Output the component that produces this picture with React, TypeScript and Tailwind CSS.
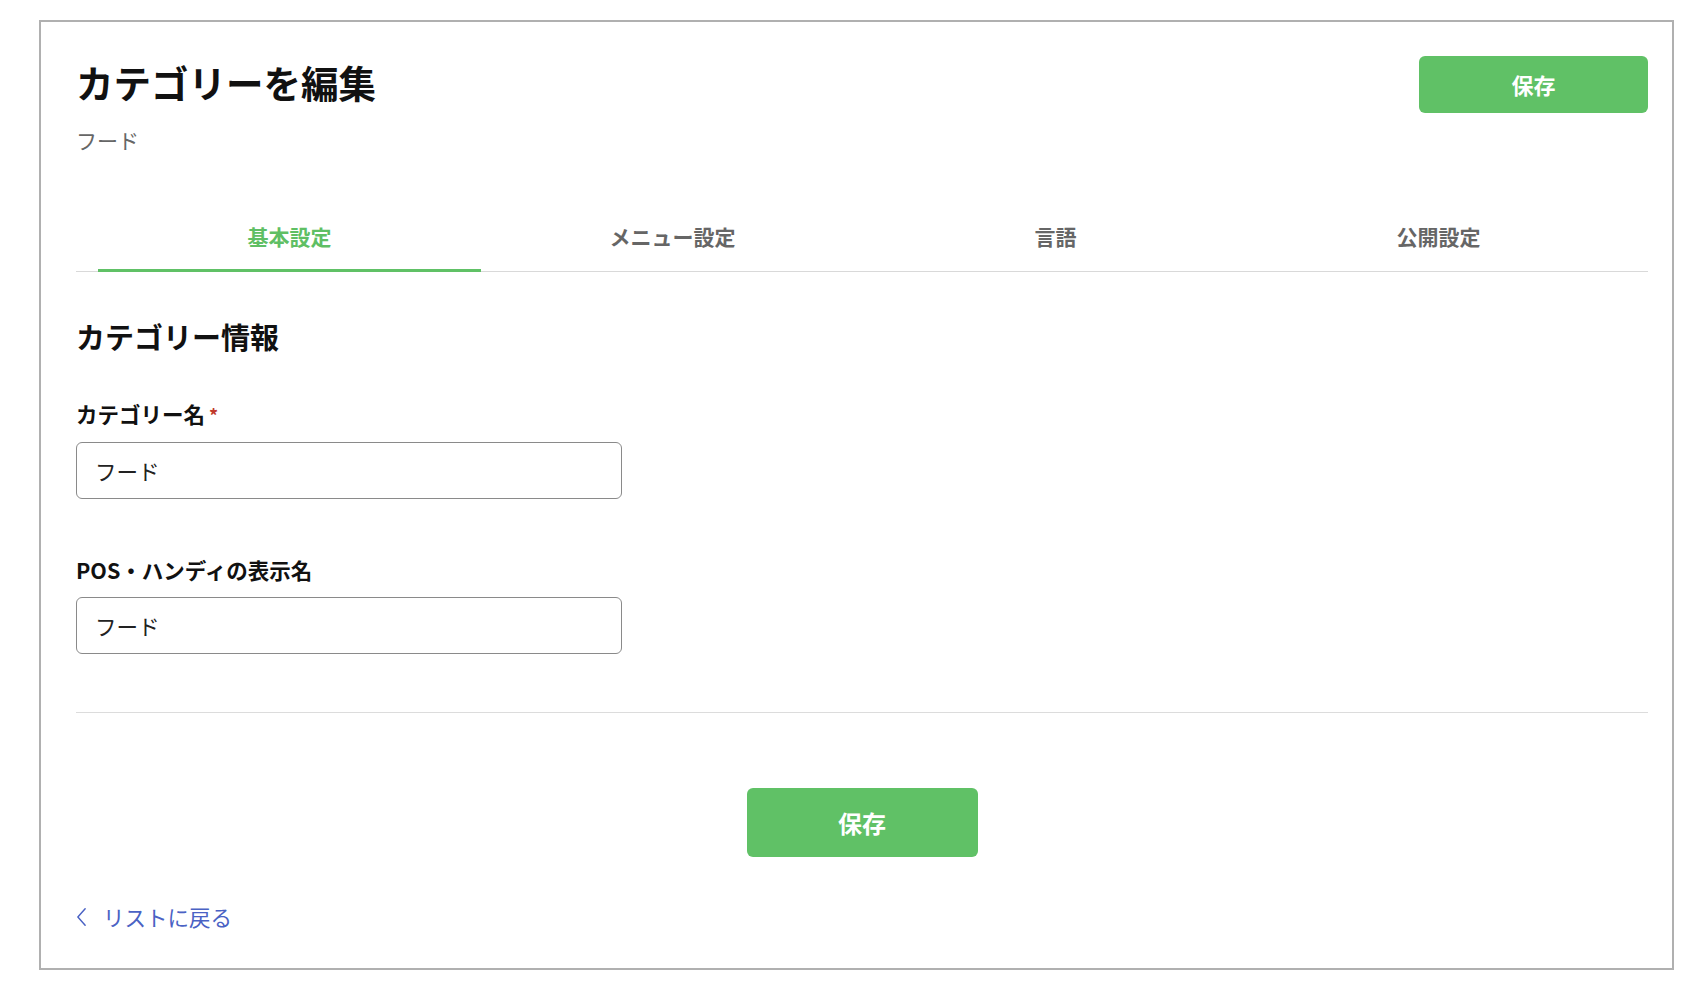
const FONT = { fontFamily: '"Noto Sans CJK JP", "Noto Sans", sans-serif' }

const TABS = ['基本設定', 'メニュー設定', '言語', '公開設定']

function Field({ label, required, value }: { label: string; required?: boolean; value: string }) {
    return (
        <div className="flex flex-col">
            <label className="text-[21.5px] font-bold leading-[28px] text-[#111]">
                {label}
                {required && <span className="ml-1 text-[18px] text-[#c0392b]">*</span>}
            </label>
            <input
                readOnly
                value={value}
                className="mt-[13px] h-[57px] w-[546px] rounded-[6px] border border-[#8a8a8a] bg-white px-[18px] text-[21.5px] text-[#222] outline-none"
                style={FONT}
            />
        </div>
    )
}

export default function App() {
    return (
        <div className="min-h-screen bg-white pl-[39px] pr-[22px] pt-5 pb-7" style={FONT}>
            <div className="flex h-[950px] flex-col border-2 border-[#b0b0b0] pl-[35px] pr-[24px]">
                {/* header */}
                <div className="flex items-start justify-between pt-[34px]">
                    <div className="flex flex-col">
                        <h1 className="mt-[4px] text-[37.5px] font-bold leading-[44px] text-[#111]">カテゴリーを編集</h1>
                        <p className="mt-[22px] text-[21px] leading-[28px] text-[#666]">フード</p>
                    </div>
                    <button
                        type="button"
                        className="h-[57px] w-[229px] rounded-[6px] bg-[#60c166] text-[22px] font-bold text-white"
                    >
                        保存
                    </button>
                </div>

                {/* tabs */}
                <div className="mt-[68px] flex border-b border-[#d9d9d9] pl-[22px] pr-[18px]">
                    {TABS.map((tab, i) => (
                        <button
                            key={tab}
                            type="button"
                            className={
                                i === 0
                                    ? '-mb-px flex-1 border-b-[3px] border-[#60c166] pb-[19px] text-[21px] font-bold leading-[28px] text-[#5fbf64]'
                                    : '-mb-px flex-1 border-b-[3px] border-transparent pb-[19px] text-[21px] font-bold leading-[28px] text-[#666]'
                            }
                        >
                            {tab}
                        </button>
                    ))}
                </div>

                {/* form */}
                <h2 className="mt-[46px] text-[29px] font-bold leading-[36px] text-[#111]">カテゴリー情報</h2>
                <div className="mt-[46px]">
                    <Field label="カテゴリー名" required value="フード" />
                </div>
                <div className="mt-[57px]">
                    <Field label="POS・ハンディの表示名" value="フード" />
                </div>

                <div className="mt-[58px] border-t border-[#dcdcdc]" />

                <div className="mt-[75px] flex justify-center">
                    <button
                        type="button"
                        className="h-[69px] w-[231px] rounded-[6px] bg-[#60c166] text-[24px] font-bold text-white"
                    >
                        保存
                    </button>
                </div>

                <a href="#" className="mt-[46px] flex items-center gap-[16px] text-[21.5px] leading-[28px] text-[#4a62c4]">
                    <svg viewBox="0 0 12 22" className="h-[20px] w-[11px]" fill="none" stroke="currentColor" strokeWidth={1.6}>
                        <path d="M10 2 2 11l8 9" strokeLinecap="round" strokeLinejoin="round" />
                    </svg>
                    リストに戻る
                </a>
            </div>
        </div>
    )
}
